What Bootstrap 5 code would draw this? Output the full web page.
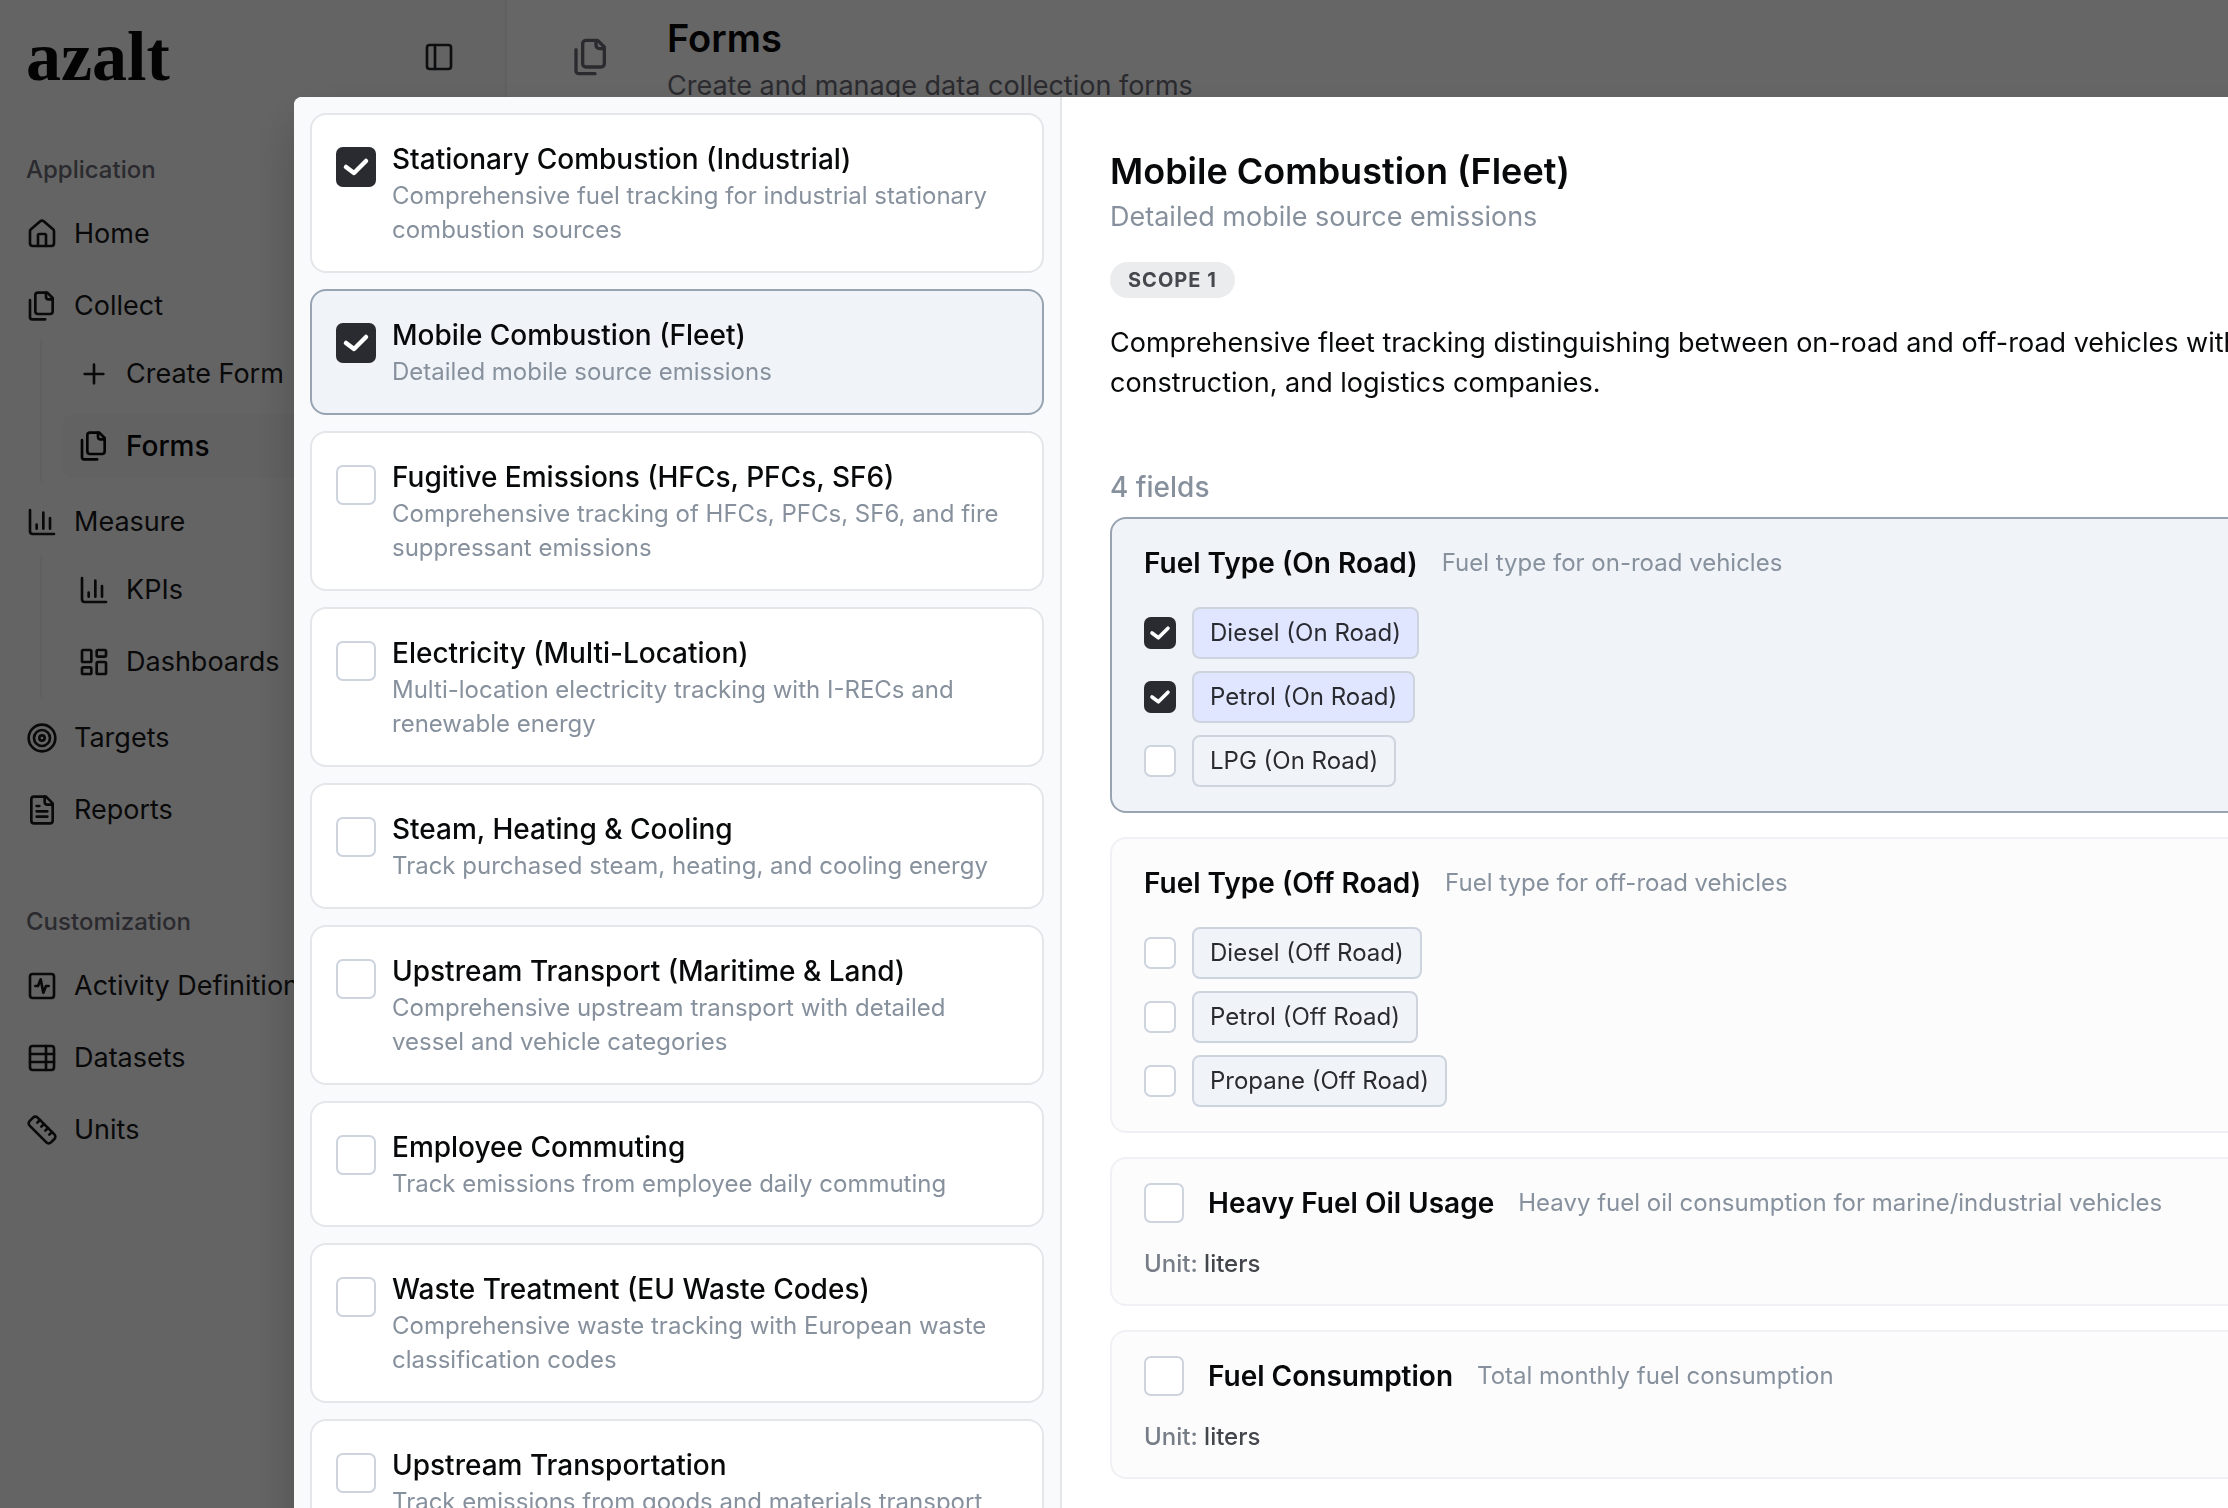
<!DOCTYPE html>
<html lang="en">
<head>
<meta charset="utf-8">
<meta name="viewport" content="width=device-width, initial-scale=1">
<title>azalt – Forms</title>
<link href="https://cdn.jsdelivr.net/npm/bootstrap@5.3.0/dist/css/bootstrap.min.css" rel="stylesheet">
<style>
  :root { --ink: #08090a; --muted: #87919d; --line: #e4e6ea; --strong: #98a4b2; --tint: #f0f4f8; --dark: #2a2b30; --ctl: #ced4de; }
  body { font-family: Inter, "Liberation Sans", sans-serif; font-size: 27px; line-height: 40px; color: var(--ink); background: #fff; }
  .t-sm { font-size: 24px; line-height: 34px; }
  .t-muted { color: var(--muted); }
  .ico { width: 32px; height: 32px; flex: none; fill: none; stroke: currentColor; stroke-width: 2; stroke-linecap: round; stroke-linejoin: round; }
  .ico-lg { width: 40px; height: 40px; }

  .side { width: 507px; flex: none; background: #fafafa; border-right: 2px solid #f0f0f2; padding: 0 10px; }
  .side-head { height: 114px; padding: 0 40px 0 16px; margin-bottom: 24px; }
  .side-head .ico { stroke-width: 2; }
  .wordmark { font-family: "Liberation Serif", serif; font-weight: 700; font-size: 70px; line-height: 70px; color: var(--ink); text-decoration: none; }
  .side-label { height: 64px; padding: 0 16px; font-size: 24px; font-weight: 500; color: #6b6b76; }
  .side-link { height: 64px; padding: 0 16px; gap: 16px; border-radius: 12px; color: #18181b; text-decoration: none; white-space: nowrap; }
  .side-link.active { background: #f5f5f7; color: var(--ink); font-size: 28px; font-weight: 500; }
  .side-list { gap: 8px; }
  .side-sub { margin: 0 0 0 30px; padding: 4px 0 4px 20px; border-left: 2px solid #f0f0f2; gap: 8px; }
  .side-group + .side-group { margin-top: 48px; }
  .top-bar { padding: 6px 64px; gap: 56px; }
  .top-bar .ico { margin-top: 31px; color: #6b6b76; }
  .top-bar h1 { font-size: 38px; line-height: 64px; font-weight: 600; margin: 0 0 -4px; }
  .top-bar p { color: #6b6b76; margin: 0; }

  .shade { position: fixed; inset: 0; background: rgba(0,0,0,.6); }
  .dialog-box { position: fixed; top: 97px; left: 294px; right: -160px; bottom: -120px; border-radius: 8px; background: #fff; overflow: hidden; box-shadow: 0 24px 48px rgba(0,0,0,.2); }
  .pick-pane { width: 768px; flex: none; padding: 16px; gap: 16px; background: #f9fafc; border-right: 2px solid var(--line); }
  .pick { padding: 24px; gap: 16px; border: 2px solid var(--line); border-radius: 16px; background: #fff; }
  .pick .form-check-input { margin-top: 8px; }
  .pick label { font-size: 28px; font-weight: 500; }
  .pick.on, .field-box.on { background: var(--tint); border-color: var(--strong); }

  .form-check-input { flex: none; width: 40px; height: 40px; margin: 0; border: 2px solid var(--ctl); border-radius: 8px; background-color: #fff; }
  .form-check-input.small-box { width: 32px; height: 32px; }
  .form-check-input:checked { background-color: var(--dark); border-color: var(--dark); }
  .form-check-input:checked[type=checkbox] { background-size: 100% 100%; background-origin: border-box; background-image: url("data:image/svg+xml,%3csvg xmlns='http://www.w3.org/2000/svg' viewBox='0 0 40 40'%3e%3cpath fill='none' stroke='%23fff' stroke-width='4.500' stroke-linecap='round' stroke-linejoin='round' d='M10 20l8 6 12-12'/%3e%3c/svg%3e"); }

  .detail-pane { padding: 48px; }
  .detail-pane h2 { font-size: 36px; line-height: 52px; font-weight: 600; margin: 0; }
  .scope-tag { margin: 25px 0; padding: 0 18px; height: 36px; border-radius: 18px; background: #ebecee; color: #45484d; font-size: 20px; line-height: 36px; font-weight: 700; letter-spacing: 1px; }
  .field-count { margin: 64px 0 10px; font-size: 28px; font-weight: 500; }
  .field-list { gap: 24px; }
  .field-box { padding: 24px 32px; border: 2px solid #f0f1f4; border-radius: 16px; background: #fcfcfd; min-width: 0; gap: 24px; }
  .field-name { font-size: 28px; line-height: 40px; font-weight: 600; margin: 0; }
  .field-head { gap: 24px; }
  .choice-list { gap: 12px; }
  .choice { gap: 16px; }
  .chip { padding: 7px 16px; border: 2px solid var(--ctl); border-radius: 8px; background: var(--tint); color: var(--dark); }
  input:checked + .chip { background: #e0e6ff; }
  .unit-line { line-height: 33px; font-weight: 500; color: #767d86; }
  .unit-line span { color: #43464b; }
</style>
</head>
<body class="overflow-hidden">

<svg class="d-none">
  <symbol id="i-files" viewBox="0 0 24 24"><path d="M20 7h-3a2 2 0 0 1-2-2V2"/><path d="M9 18a2 2 0 0 1-2-2V4a2 2 0 0 1 2-2h7l4 4v10a2 2 0 0 1-2 2Z"/><path d="M3 7.600v12.800A1.600 1.600 0 0 0 4.600 22h9.800"/></symbol>
  <symbol id="i-home" viewBox="0 0 24 24"><path d="M15 21v-8a1 1 0 0 0-1-1h-4a1 1 0 0 0-1 1v8"/><path d="M3 10a2 2 0 0 1 .709-1.528l7-5.999a2 2 0 0 1 2.582 0l7 5.999A2 2 0 0 1 21 10v9a2 2 0 0 1-2 2H5a2 2 0 0 1-2-2z"/></symbol>
  <symbol id="i-chart" viewBox="0 0 24 24"><path d="M3 3v16a2 2 0 0 0 2 2h16"/><path d="M18 17V9"/><path d="M13 17V5"/><path d="M8 17v-3"/></symbol>
</svg>

<div class="d-flex vh-100">
  <nav class="side" aria-label="Main">
    <div class="side-head d-flex align-items-center justify-content-between">
      <a class="wordmark" href="#">azalt</a>
      <button type="button" class="btn p-0 border-0 d-flex" aria-label="Toggle sidebar"><svg class="ico" viewBox="0 0 24 24"><rect width="18" height="18" x="3" y="3" rx="2"/><path d="M9 3v18"/></svg></button>
    </div>
    <div class="side-group">
      <div class="side-label d-flex align-items-center">Application</div>
      <div class="side-list d-flex flex-column">
        <a class="side-link d-flex align-items-center" href="#"><svg class="ico"><use href="#i-home"/></svg>Home</a>
        <div>
          <a class="side-link d-flex align-items-center" href="#"><svg class="ico"><use href="#i-files"/></svg>Collect</a>
          <div class="side-sub d-flex flex-column">
            <a class="side-link d-flex align-items-center" href="#"><svg class="ico" viewBox="0 0 24 24"><path d="M5 12h14M12 5v14"/></svg>Create Form</a>
            <a class="side-link active d-flex align-items-center" href="#"><svg class="ico"><use href="#i-files"/></svg>Forms</a>
          </div>
        </div>
        <div>
          <a class="side-link d-flex align-items-center" href="#"><svg class="ico"><use href="#i-chart"/></svg>Measure</a>
          <div class="side-sub d-flex flex-column">
            <a class="side-link d-flex align-items-center" href="#"><svg class="ico"><use href="#i-chart"/></svg>KPIs</a>
            <a class="side-link d-flex align-items-center" href="#"><svg class="ico" viewBox="0 0 24 24"><rect width="7" height="9" x="3" y="3" rx="1"/><rect width="7" height="5" x="14" y="3" rx="1"/><rect width="7" height="9" x="14" y="12" rx="1"/><rect width="7" height="5" x="3" y="16" rx="1"/></svg>Dashboards</a>
          </div>
        </div>
        <a class="side-link d-flex align-items-center" href="#"><svg class="ico" viewBox="0 0 24 24"><circle cx="12" cy="12" r="10"/><circle cx="12" cy="12" r="6"/><circle cx="12" cy="12" r="2"/></svg>Targets</a>
        <a class="side-link d-flex align-items-center" href="#"><svg class="ico" viewBox="0 0 24 24"><path d="M15 2H6a2 2 0 0 0-2 2v16a2 2 0 0 0 2 2h12a2 2 0 0 0 2-2V7Z"/><path d="M14 2v4a2 2 0 0 0 2 2h4"/><path d="M10 9H8M16 13H8M16 17H8"/></svg>Reports</a>
      </div>
    </div>
    <div class="side-group">
      <div class="side-label d-flex align-items-center">Customization</div>
      <div class="side-list d-flex flex-column">
        <a class="side-link d-flex align-items-center" href="#"><svg class="ico" viewBox="0 0 24 24"><rect width="18" height="18" x="3" y="3" rx="2"/><path d="M17 12h-2l-2 5-2-10-2 5H7"/></svg>Activity Definitions</a>
        <a class="side-link d-flex align-items-center" href="#"><svg class="ico" viewBox="0 0 24 24"><rect width="18" height="18" x="3" y="3" rx="2"/><path d="M15 3v18M3 9h18M3 15h18"/></svg>Datasets</a>
        <a class="side-link d-flex align-items-center" href="#"><svg class="ico" viewBox="0 0 24 24"><path d="M21.300 15.300a2.400 2.400 0 0 1 0 3.400l-2.600 2.600a2.400 2.400 0 0 1-3.400 0L2.700 8.700a2.410 2.410 0 0 1 0-3.400l2.600-2.600a2.410 2.410 0 0 1 3.400 0Z"/><path d="m14.500 12.500 2-2M11.500 9.500l2-2M8.500 6.500l2-2M17.500 15.500l2-2"/></svg>Units</a>
      </div>
    </div>
  </nav>
  <main class="flex-grow-1">
    <header class="top-bar d-flex">
      <svg class="ico ico-lg"><use href="#i-files"/></svg>
      <div>
        <h1>Forms</h1>
        <p>Create and manage data collection forms</p>
      </div>
    </header>
  </main>
</div>

<div class="shade"></div>
<div class="dialog-box d-flex" role="dialog" aria-modal="true" aria-labelledby="detailTitle">
  <div class="pick-pane d-flex flex-column">
    <div class="pick d-flex"><input class="form-check-input" type="checkbox" id="p1" checked><div><label class="d-block" for="p1">Stationary Combustion (Industrial)</label><div class="t-sm t-muted">Comprehensive fuel tracking for industrial stationary combustion sources</div></div></div>
    <div class="pick on d-flex"><input class="form-check-input" type="checkbox" id="p2" checked><div><label class="d-block" for="p2">Mobile Combustion (Fleet)</label><div class="t-sm t-muted">Detailed mobile source emissions</div></div></div>
    <div class="pick d-flex"><input class="form-check-input" type="checkbox" id="p3"><div><label class="d-block" for="p3">Fugitive Emissions (HFCs, PFCs, SF6)</label><div class="t-sm t-muted">Comprehensive tracking of HFCs, PFCs, SF6, and fire suppressant emissions</div></div></div>
    <div class="pick d-flex"><input class="form-check-input" type="checkbox" id="p4"><div><label class="d-block" for="p4">Electricity (Multi-Location)</label><div class="t-sm t-muted">Multi-location electricity tracking with I-RECs and renewable energy</div></div></div>
    <div class="pick d-flex"><input class="form-check-input" type="checkbox" id="p5"><div><label class="d-block" for="p5">Steam, Heating &amp; Cooling</label><div class="t-sm t-muted">Track purchased steam, heating, and cooling energy</div></div></div>
    <div class="pick d-flex"><input class="form-check-input" type="checkbox" id="p6"><div><label class="d-block" for="p6">Upstream Transport (Maritime &amp; Land)</label><div class="t-sm t-muted">Comprehensive upstream transport with detailed vessel and vehicle categories</div></div></div>
    <div class="pick d-flex"><input class="form-check-input" type="checkbox" id="p7"><div><label class="d-block" for="p7">Employee Commuting</label><div class="t-sm t-muted">Track emissions from employee daily commuting</div></div></div>
    <div class="pick d-flex"><input class="form-check-input" type="checkbox" id="p8"><div><label class="d-block" for="p8">Waste Treatment (EU Waste Codes)</label><div class="t-sm t-muted">Comprehensive waste tracking with European waste classification codes</div></div></div>
    <div class="pick d-flex"><input class="form-check-input" type="checkbox" id="p9"><div><label class="d-block" for="p9">Upstream Transportation</label><div class="t-sm t-muted">Track emissions from goods and materials transport</div></div></div>
  </div>

  <div class="detail-pane flex-grow-1">
    <h2 id="detailTitle">Mobile Combustion (Fleet)</h2>
    <div class="t-muted">Detailed mobile source emissions</div>
    <div class="d-flex"><span class="scope-tag">SCOPE 1</span></div>
    <p class="m-0">Comprehensive fleet tracking distinguishing between on-road and off-road vehicles with<br>construction, and logistics companies.</p>
    <div class="field-count t-muted">4 fields</div>

    <div class="field-list d-flex flex-column">
      <section class="field-box on d-flex flex-column">
        <div class="field-head d-flex align-items-center"><h3 class="field-name">Fuel Type (On Road)</h3><span class="t-sm t-muted">Fuel type for on-road vehicles</span></div>
        <div class="choice-list d-flex flex-column">
          <div class="choice d-flex align-items-center"><input class="form-check-input small-box" type="checkbox" id="c1" checked><label class="chip t-sm" for="c1">Diesel (On Road)</label></div>
          <div class="choice d-flex align-items-center"><input class="form-check-input small-box" type="checkbox" id="c2" checked><label class="chip t-sm" for="c2">Petrol (On Road)</label></div>
          <div class="choice d-flex align-items-center"><input class="form-check-input small-box" type="checkbox" id="c3"><label class="chip t-sm" for="c3">LPG (On Road)</label></div>
        </div>
      </section>
      <section class="field-box d-flex flex-column">
        <div class="field-head d-flex align-items-center"><h3 class="field-name">Fuel Type (Off Road)</h3><span class="t-sm t-muted">Fuel type for off-road vehicles</span></div>
        <div class="choice-list d-flex flex-column">
          <div class="choice d-flex align-items-center"><input class="form-check-input small-box" type="checkbox" id="c4"><label class="chip t-sm" for="c4">Diesel (Off Road)</label></div>
          <div class="choice d-flex align-items-center"><input class="form-check-input small-box" type="checkbox" id="c5"><label class="chip t-sm" for="c5">Petrol (Off Road)</label></div>
          <div class="choice d-flex align-items-center"><input class="form-check-input small-box" type="checkbox" id="c6"><label class="chip t-sm" for="c6">Propane (Off Road)</label></div>
        </div>
      </section>
      <section class="field-box d-flex flex-column">
        <div class="field-head d-flex align-items-center"><input class="form-check-input" type="checkbox" id="f3"><label class="field-name" for="f3">Heavy Fuel Oil Usage</label><span class="t-sm t-muted">Heavy fuel oil consumption for marine/industrial vehicles</span></div>
        <div class="t-sm unit-line">Unit: <span>liters</span></div>
      </section>
      <section class="field-box d-flex flex-column">
        <div class="field-head d-flex align-items-center"><input class="form-check-input" type="checkbox" id="f4"><label class="field-name" for="f4">Fuel Consumption</label><span class="t-sm t-muted">Total monthly fuel consumption</span></div>
        <div class="t-sm unit-line">Unit: <span>liters</span></div>
      </section>
    </div>
  </div>
</div>
<script src="https://cdn.jsdelivr.net/npm/bootstrap@5.3.0/dist/js/bootstrap.bundle.min.js"></script>
</body>
</html>
